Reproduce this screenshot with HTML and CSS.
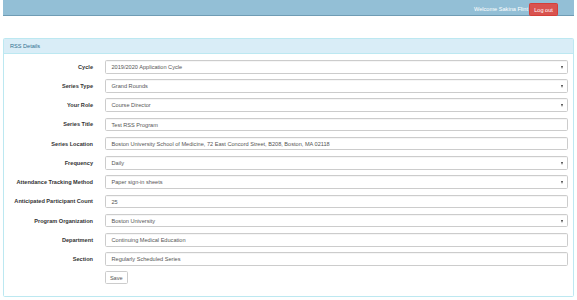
FILE: index.html
```html
<!DOCTYPE html>
<html>
<head>
<meta charset="utf-8">
<link rel="stylesheet" href="styles.css">
</head>
<body>
<div class="page">
  <header class="topbar">
    <span class="welcome">Welcome Sakina Flint</span>
    <button class="btn-logout">Log out</button>
  </header>

  <section class="panel">
    <div class="panel-heading">RSS Details</div>
    <div class="panel-body">
      <form class="form">
        <label class="lbl">Cycle</label>
        <div class="ctl select">2019/2020 Application Cycle</div>

        <label class="lbl">Series Type</label>
        <div class="ctl select">Grand Rounds</div>

        <label class="lbl">Your Role</label>
        <div class="ctl select">Course Director</div>

        <label class="lbl">Series Title</label>
        <div class="ctl input">Test RSS Program</div>

        <label class="lbl">Series Location</label>
        <div class="ctl input">Boston University School of Medicine, 72 East Concord Street, B208, Boston, MA 02118</div>

        <label class="lbl">Frequency</label>
        <div class="ctl select">Daily</div>

        <label class="lbl">Attendance Tracking Method</label>
        <div class="ctl select">Paper sign-in sheets</div>

        <label class="lbl">Anticipated Participant Count</label>
        <div class="ctl input">25</div>

        <label class="lbl">Program Organization</label>
        <div class="ctl select">Boston University</div>

        <label class="lbl">Department</label>
        <div class="ctl input">Continuing Medical Education</div>

        <label class="lbl">Section</label>
        <div class="ctl input">Regularly Scheduled Series</div>

        <span></span>
        <div class="actions"><button type="button" class="btn-save">Save</button></div>
      </form>
    </div>
  </section>
</div>
</body>
</html>
```

FILE: styles.css
```css
* { box-sizing: border-box; }

html, body {
  margin: 0;
  padding: 0;
  background: #ffffff;
  font-family: "Liberation Sans", Arial, sans-serif;
  font-size: 5.6px;
  color: #333333;
}

.page {
  padding: 0 3px;
  width: 577px;
}

.topbar {
  height: 16px;
  background: #93bfd6;
  border-bottom: 1.5px solid #6f9cb4;
  display: flex;
  align-items: flex-start;
  justify-content: flex-end;
  padding: 3px 16px 0 0;
}

.welcome {
  color: #ffffff;
  line-height: 13px;
  margin-right: 1px;
}

.btn-logout {
  height: 13px;
  width: 29px;
  padding: 0;
  margin: 0;
  font-family: inherit;
  font-size: 5.6px;
  color: #ffffff;
  background: #d9534f;
  border: 0.5px solid #d43f3a;
  border-radius: 1.5px;
  position: relative;
  z-index: 1;
}

.panel {
  margin-top: 22px;
  border: 1px solid #bce8f1;
  border-radius: 1.6px;
  background: #ffffff;
}

.panel-heading {
  height: 15px;
  background: #d9edf7;
  color: #31708f;
  border-bottom: 0.5px solid #bce8f1;
  padding: 0 6px;
  line-height: 14.5px;
}

.panel-body {
  padding: 6px 5px 11.6px 5px;
}

.form {
  display: grid;
  grid-template-columns: 84px 1fr;
  column-gap: 12px;
  row-gap: 5.63px;
  align-items: center;
}

.lbl {
  font-weight: bold;
  text-align: right;
  white-space: nowrap;
}

.ctl {
  height: 13.6px;
  line-height: 12.6px;
  padding: 0 4.8px 0 5.5px;
  border: 0.5px solid #cccccc;
  border-radius: 1.6px;
  color: #555555;
  background: #ffffff;
  box-shadow: inset 0 0.5px 0.5px rgba(0, 0, 0, 0.075);
  white-space: nowrap;
  overflow: hidden;
  position: relative;
}

.select::after {
  content: "";
  position: absolute;
  right: 4px;
  top: 5px;
  width: 0;
  height: 0;
  border-left: 1.8px solid transparent;
  border-right: 1.8px solid transparent;
  border-top: 3px solid #444444;
}

.actions {
  display: flex;
}

.btn-save {
  height: 13px;
  width: 22.5px;
  padding: 0;
  margin: 0;
  font-family: inherit;
  font-size: 5.6px;
  color: #555555;
  background: #ffffff;
  border: 0.5px solid #cccccc;
  border-radius: 1.6px;
}
```
